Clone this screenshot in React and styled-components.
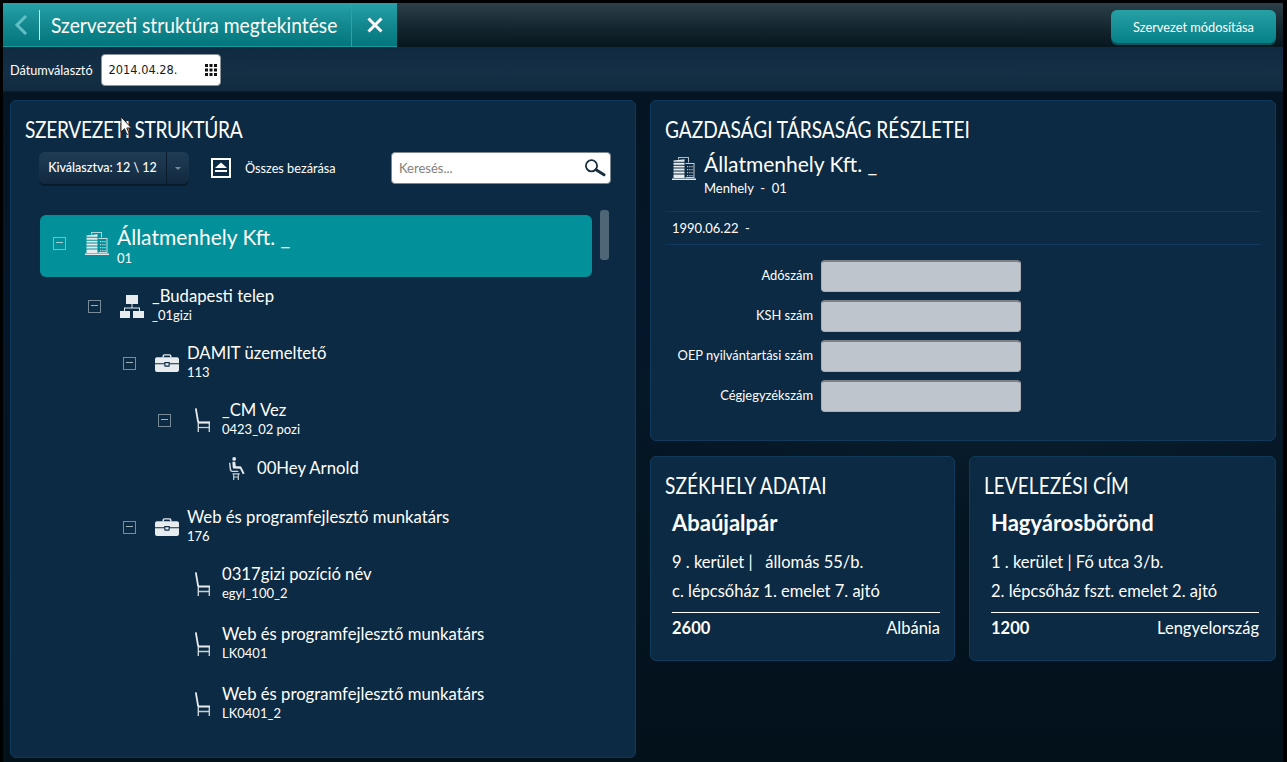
import React from 'react'
import styled, { createGlobalStyle } from 'styled-components'

const GlobalStyle = createGlobalStyle`
  html, body { margin: 0; padding: 0; height: 100%; background: #000; }
  body { font-family: Lato, "Liberation Sans", sans-serif; color: #fff; overflow: hidden; }
  * { box-sizing: border-box; }
`

const Frame = styled.div`
  position: relative;
  width: 1287px;
  height: 762px;
  padding: 3px 4px 0 3px;
  overflow: hidden;
  background: #000;
`

const Screen = styled.div`
  height: 100%;
  background:
    radial-gradient(420px 120px at 1010px 395px, rgba(40, 80, 90, 0.16), transparent),
    linear-gradient(180deg, #04131f 0%, #04172a 40%, #041522 70%, #03111b 100%);
`

const TopBar = styled.header`
  display: flex;
  justify-content: space-between;
  height: 44px;
  padding-right: 7px;
  background: linear-gradient(180deg, #2d3f48 0%, #14262f 55%, #07161f 100%);
`

const TitleTab = styled.div`
  display: flex;
  align-items: center;
  width: 394px;
  background: linear-gradient(180deg, #28a2aa 0%, #13888f 50%, #03767d 100%);
  border-bottom: 1px solid #16999f;
`

const BackButton = styled.div`
  display: flex;
  flex: none;
  align-items: center;
  justify-content: center;
  width: 36px;
  height: 100%;
  color: #62c0c4;
`

const TitleSlot = styled.div`
  flex: 1;
  min-width: 0;
  height: 30px;
  padding-left: 11px;
  border-left: 1px solid #d6eeee;
`

const TitleText = styled.h1`
  display: inline-block;
  margin: 0;
  font-size: 22px;
  font-weight: 400;
  line-height: 29px;
  white-space: nowrap;
  transform: scaleX(0.875);
  transform-origin: 0 50%;
`

const CloseButton = styled.div`
  display: flex;
  flex: none;
  align-items: center;
  justify-content: center;
  width: 46px;
  height: 100%;
  border-left: 1px solid #27a4a9;
`

const PrimaryButton = styled.button`
  width: 165px;
  height: 33px;
  margin-top: 7px;
  padding: 0;
  border: 0;
  border-radius: 6px;
  background: linear-gradient(180deg, #27a1a6 0%, #058086 100%);
  box-shadow: 0 2px 0 #07545c;
  color: #fff;
  font-family: inherit;
  font-size: 12.8px;
`

const FilterBar = styled.div`
  display: flex;
  align-items: center;
  gap: 8px;
  height: 45px;
  padding-left: 7px;
  border-top: 1px solid #0f2b45;
  border-bottom: 1px solid #0a1e2e;
  background: linear-gradient(180deg, #102a42 0%, #152f45 60%, #112a3e 100%);
`

const FilterLabel = styled.label`
  font-size: 12.7px;
`

const DateBox = styled.div`
  display: flex;
  align-items: center;
  justify-content: space-between;
  width: 120px;
  height: 32px;
  padding: 0 3px 0 7px;
  background: #fff;
  border: 1px solid #8b939a;
  border-radius: 4px;
  color: #1a1a1a;
  font-family: "DejaVu Sans", sans-serif;
  font-size: 11.4px;
`

const Content = styled.main`
  display: grid;
  grid-template-columns: 626px 626px;
  gap: 14px;
  padding: 8px 7px 0;
`

const Panel = styled.section`
  position: relative;
  height: ${(p) => p.$height}px;
  padding: 15px 14px 0;
  background: #0c2a43;
  border: 1px solid #103a5c;
  border-radius: 6px;
  overflow: hidden;
`

const PanelTitle = styled.h2`
  margin: 0;
  font-size: 22.5px;
  font-weight: 400;
  line-height: 28px;
  letter-spacing: ${(p) => (p.$tight ? '-0.35px' : '0')};
  text-transform: uppercase;
  white-space: nowrap;
  transform: scaleX(0.85);
  transform-origin: 0 50%;
`

const TreeTools = styled.div`
  display: flex;
  align-items: center;
  margin: 8px 0 0 14px;
  height: 32px;
`

const SplitButton = styled.div`
  display: flex;
  width: 150px;
  height: 32px;
  border-radius: 6px;
  background: linear-gradient(180deg, #1f3c55 0%, #11293f 100%);
  box-shadow: 0 2px 0 #081b2b;
  font-size: 12.5px;
  font-weight: 500;
  line-height: 32px;
`

const SplitLabel = styled.span`
  flex: 1;
  text-align: center;
  white-space: nowrap;
  border-right: 1px solid #0a1c2c;
`

const SplitCaret = styled.span`
  display: flex;
  align-items: center;
  justify-content: center;
  width: 22px;
  &::after {
    content: '';
    border: 3px solid transparent;
    border-top: 3px solid #7a8c9a;
    margin-top: 3px;
  }
`

const CollapseAll = styled.div`
  display: flex;
  align-items: center;
  gap: 14px;
  margin-left: 22px;
  font-size: 12.7px;
  white-space: nowrap;
`

const SearchBox = styled.div`
  display: flex;
  align-items: center;
  justify-content: space-between;
  width: 220px;
  height: 32px;
  margin-left: auto;
  margin-right: 10px;
  padding: 0 4px 0 7px;
  background: #fff;
  border: 1px solid #7d8790;
  border-radius: 4px;
  color: #85807c;
  font-size: 13px;
`

const Tree = styled.div`
  margin: 31px 0 0 15px;
  width: 552px;
`

const TreeRow = styled.div`
  display: flex;
  align-items: center;
  min-height: ${(p) => (p.$root ? '62px' : '0')};
  margin-top: ${(p) => p.$gap ?? 19}px;
  padding-left: ${(p) => 13 + 35 * p.$level}px;
  padding-bottom: ${(p) => (p.$root ? 6 : 0)}px;
  border-radius: 6px;
  background: ${(p) => (p.$root ? '#02919a' : 'transparent')};
`

const Toggle = styled.span`
  position: relative;
  flex: none;
  width: 13px;
  height: 13px;
  border: 1px solid ${(p) => (p.$hidden ? 'transparent' : 'rgba(225, 235, 240, 0.5)')};
  &::after {
    content: '';
    display: ${(p) => (p.$hidden ? 'none' : 'block')};
    margin: 4.5px 2px 0;
    height: 1px;
    background: rgba(225, 235, 240, 0.7);
  }
`

const NodeIcon = styled.span`
  display: flex;
  justify-content: center;
  flex: none;
  width: 24px;
  margin: 0 8px 0 19px;
  color: #e8ecef;
`

const NodeText = styled.div`
  min-width: 0;
`

const NodeTitle = styled.div`
  font-size: ${(p) => (p.$root ? 21 : 16.7)}px;
  line-height: ${(p) => (p.$root ? 36 : 19)}px;
  white-space: nowrap;
`

const NodeCode = styled.div`
  font-size: 13px;
  line-height: 19px;
  margin-top: ${(p) => (p.$root ? -6 : 0)}px;
`

const ScrollThumb = styled.div`
  position: absolute;
  left: 589px;
  top: 109px;
  width: 9px;
  height: 50px;
  border-radius: 3px;
  background: #4f6676;
`

const RightColumn = styled.div`
  display: flex;
  flex-direction: column;
  gap: 15px;
`

const CompanyHead = styled.div`
  display: flex;
  align-items: flex-start;
  gap: 8px;
  height: 65px;
  padding: 0 0 0 7px;
  margin-top: 3px;
  border-bottom: 1px solid #123a5c;
`

const CompanyIcon = styled.span`
  margin-top: 9px;
  color: #e8ecef;
`

const CompanyName = styled.div`
  padding-top: 2px;
  font-size: 21px;
  line-height: 30px;
  white-space: nowrap;
`

const CompanySub = styled.div`
  font-size: 13px;
  line-height: 18px;
  white-space: pre;
`

const DateLine = styled.div`
  height: 33px;
  padding-left: 7px;
  border-bottom: 1px solid #123a5c;
  font-size: 13px;
  line-height: 33px;
  white-space: pre;
`

const FormGrid = styled.div`
  display: grid;
  grid-template-columns: 148px 200px;
  column-gap: 8px;
  row-gap: 8px;
  align-items: center;
  margin-top: 15px;
`

const FieldLabel = styled.label`
  padding-bottom: 2px;
  text-align: right;
  font-size: 12.9px;
  white-space: nowrap;
`

const FieldInput = styled.div`
  height: 32px;
  background: #bfc5cc;
  border: 1px solid #a9afb5;
  border-top: 2px solid #7d8084;
  border-radius: 4px;
`

const AddressRow = styled.div`
  display: grid;
  grid-template-columns: 305px 307px;
  gap: 14px;
`

const AddressBody = styled.div`
  padding: 0 ${(p) => p.$trim}px 0 7px;
`

const City = styled.div`
  margin-top: 9px;
  font-size: 22px;
  font-weight: 700;
  line-height: 28px;
`

const AddressLine = styled.div`
  margin-top: ${(p) => p.$top}px;
  font-size: 16.5px;
  line-height: 20px;
  white-space: pre;
`

const AddressFoot = styled.div`
  display: flex;
  justify-content: space-between;
  margin-top: 11px;
  padding-top: 5px;
  border-top: 1px solid #fff;
  font-size: 16.5px;
  line-height: 20px;
  strong { font-weight: 700; }
`

const Cursor = styled.svg`
  position: absolute;
  left: 120px;
  top: 116px;
`

const BuildingIcon = ({ size = 24 }) => (
  <svg width={size} height={size} viewBox="0 0 24 24" fill="currentColor">
    <path d="M0 22.6h24V24H0z" />
    <path d="M6 3.500V1h11v5.500h-1V2H7v1.500z" opacity=".75" />
    <path d="M1.500 4.500l11-1.200v2.500h-11zM1.500 6.800h11v1.900h-11zM1.500 9.700h11v1.900h-11zM1.500 12.600h11v1.900h-11zM1.500 15.500h11v1.900h-11zM1.500 18.400h11v3.600h-11z" />
    <path d="M13.500 7h9v15h-9v-1h8V8h-8z" opacity=".85" />
    <path
      d="M15 10h1.200v1.200H15zM17.300 10h1.200v1.200h-1.200zM19.400 10h1.200v1.200h-1.200zM15 13h1.200v1.200H15zM17.300 13h1.200v1.200h-1.200zM19.400 13h1.200v1.200h-1.200zM15 16h1.200v1.200H15zM17.300 16h1.200v1.200h-1.200zM19.400 16h1.200v1.200h-1.200zM15 19h1.200v1.200H15zM17.300 19h1.200v1.200h-1.200zM19.400 19h1.200v1.200h-1.200z"
      opacity=".8"
    />
  </svg>
)

const SitemapIcon = () => (
  <svg width="24" height="23" viewBox="0 0 24 23" fill="currentColor">
    <path d="M6 0h12v9H6zM0 16h10v7H0zM13 16h11v7H13z" />
    <path d="M11.500 9h1v3.500H20V16h-1v-2.500H5V16H4v-3.500h7.500z" />
  </svg>
)

const BriefcaseIcon = () => (
  <svg width="24" height="18" viewBox="0 0 24 18" fill="currentColor">
    <path d="M7.500 3.500V2.200C7.500 1 8.400.2 9.500.2h5c1.100 0 2 .8 2 2v1.300h-1.400V2.400c0-.5-.3-.8-.8-.8H9.700c-.5 0-.8.3-.8.800v1.100z" />
    <path d="M2 3.300h20c1.100 0 2 .9 2 2v3.900h-9.300V8H9.300v1.200H0V5.300c0-1.100.9-2 2-2z" />
    <path d="M0 10.300h9.300v1.400c0 .6.400 1 1 1h3.400c.6 0 1-.4 1-1v-1.400H24V16c0 1.100-.9 2-2 2H2c-1.100 0-2-.9-2-2z" />
    <path d="M10.400 9.200h3.200v2.300h-3.200z" />
  </svg>
)

const ChairIcon = () => (
  <svg width="15" height="24" viewBox="0 0 15 24" fill="none" stroke="currentColor">
    <path d="M0.800 0.300L3.200 14.500" strokeWidth="1.800" />
    <path d="M3 14.500H15" strokeWidth="2.200" />
    <path d="M3.300 15v9M14.300 14v10" strokeWidth="1.400" opacity=".85" />
    <path d="M3.500 19.500H14" strokeWidth="1.300" opacity=".85" />
  </svg>
)

const SeatedIcon = () => (
  <svg width="17" height="23" viewBox="0 0 17 23" fill="currentColor">
    <circle cx="5.200" cy="1.900" r="1.900" />
    <path d="M3.400 4.800h2.800l.6 4.400 4.300.1c.7 0 1.100.3 1.400.9l3.100 6.200-1.800.8-2.700-5.500-6.300-.1c-.6 0-1-.4-1.100-1z" />
    <path d="M1.300 5.500l.9 6.800c.1 1 .7 1.500 1.600 1.500h5.500v1.200H3.200C1.700 15 .9 14 .7 12.600L0 6z" opacity=".9" />
    <path d="M3.500 16.300h7.300v1.200H9.900V23H8.700v-2.400H5.300V23H4.100v-5.500h-.6zM5.300 17.500v2h3.400v-2z" opacity=".85" />
  </svg>
)

const EjectIcon = () => (
  <svg width="20" height="20" viewBox="0 0 20 20" fill="#fff">
    <path fillRule="evenodd" d="M0 0h20v20H0zM2 2v16h16V2z" />
    <path d="M10 4.500l6 5.500H4zM4 12h12v2H4z" />
  </svg>
)

const CalendarIcon = () => (
  <svg width="12" height="12" viewBox="0 0 12 12" fill="#111">
    <path d="M0 0h3v3H0zM4.500 0h3v3h-3zM9 0h3v3H9zM0 4.500h3v3H0zM4.500 4.500h3v3h-3zM9 4.500h3v3H9zM0 9h3v3H0zM4.500 9h3v3h-3zM9 9h3v3H9z" />
  </svg>
)

const SearchIcon = () => (
  <svg width="22" height="18" viewBox="0 0 22 18" fill="none" stroke="#17303f">
    <circle cx="7.500" cy="6.800" r="5.600" strokeWidth="1.800" />
    <path d="M12 10.800l8 5" strokeWidth="3" strokeLinecap="round" />
  </svg>
)

const chair = <ChairIcon />

const nodes = [
  { level: 1, gap: 10, icon: <SitemapIcon />, title: '_Budapesti telep', code: '_01gizi', toggle: true },
  { level: 2, icon: <BriefcaseIcon />, title: 'DAMIT üzemeltető', code: '113', toggle: true },
  { level: 3, icon: chair, title: '_CM Vez', code: '0423_02 pozi', toggle: true },
  { level: 4, gap: 18, icon: <SeatedIcon />, title: '00Hey Arnold' },
  { level: 2, gap: 28, icon: <BriefcaseIcon />, title: 'Web és programfejlesztő munkatárs', code: '176', toggle: true },
  { level: 3, icon: chair, title: '0317gizi pozíció név', code: 'egyl_100_2' },
  { level: 3, gap: 22, icon: chair, title: 'Web és programfejlesztő munkatárs', code: 'LK0401' },
  { level: 3, gap: 22, icon: chair, title: 'Web és programfejlesztő munkatárs', code: 'LK0401_2' },
]

const fields = ['Adószám', 'KSH szám', 'OEP nyilvántartási szám', 'Cégjegyzékszám']

const addresses = [
  {
    title: 'Székhely adatai',
    city: 'Abaújalpár',
    line1: '9 . kerület |   állomás 55/b.',
    line2: 'c. lépcsőház 1. emelet 7. ajtó',
    zip: '2600',
    country: 'Albánia',
    trim: 0,
  },
  {
    title: 'Levelezési cím',
    city: 'Hagyárosbörönd',
    line1: '1 . kerület | Fő utca 3/b.',
    line2: '2. lépcsőház fszt. emelet 2. ajtó',
    zip: '1200',
    country: 'Lengyelország',
    trim: 2,
  },
]

const App = () => {
  return (
    <Frame>
      <GlobalStyle />
      <Screen>
        <TopBar>
          <TitleTab>
            <BackButton>
              <svg width="14" height="22" viewBox="0 0 14 22" fill="none" stroke="currentColor" strokeWidth="3">
                <path d="M12 2L3 11l9 9" />
              </svg>
            </BackButton>
            <TitleSlot>
              <TitleText>Szervezeti struktúra megtekintése</TitleText>
            </TitleSlot>
            <CloseButton>
              <svg width="16" height="16" viewBox="0 0 16 16" stroke="#fff" strokeWidth="3">
                <path d="M1.500 1.500l13 13M14.500 1.500l-13 13" />
              </svg>
            </CloseButton>
          </TitleTab>
          <PrimaryButton>Szervezet módosítása</PrimaryButton>
        </TopBar>

        <FilterBar>
          <FilterLabel>Dátumválasztó</FilterLabel>
          <DateBox>
            2014.04.28.
            <CalendarIcon />
          </DateBox>
        </FilterBar>

        <Content>
          <Panel $height={658}>
            <PanelTitle $tight>Szervezeti struktúra</PanelTitle>
            <TreeTools>
              <SplitButton>
                <SplitLabel>Kiválasztva: 12 \ 12</SplitLabel>
                <SplitCaret />
              </SplitButton>
              <CollapseAll>
                <EjectIcon />
                Összes bezárása
              </CollapseAll>
              <SearchBox>
                Keresés...
                <SearchIcon />
              </SearchBox>
            </TreeTools>
            <ScrollThumb />
            <Tree>
              <TreeRow $root $level={0} $gap={0}>
                <Toggle />
                <NodeIcon>
                  <BuildingIcon />
                </NodeIcon>
                <NodeText>
                  <NodeTitle $root>Állatmenhely Kft. _</NodeTitle>
                  <NodeCode $root>01</NodeCode>
                </NodeText>
              </TreeRow>
              {nodes.map((node, i) => (
                <TreeRow key={i} $level={node.level} $gap={node.gap}>
                  <Toggle $hidden={!node.toggle} />
                  <NodeIcon>{node.icon}</NodeIcon>
                  <NodeText>
                    <NodeTitle>{node.title}</NodeTitle>
                    {node.code && <NodeCode>{node.code}</NodeCode>}
                  </NodeText>
                </TreeRow>
              ))}
            </Tree>
          </Panel>

          <RightColumn>
            <Panel $height={341}>
              <PanelTitle>Gazdasági társaság részletei</PanelTitle>
              <CompanyHead>
                <CompanyIcon>
                  <BuildingIcon />
                </CompanyIcon>
                <div>
                  <CompanyName>Állatmenhely Kft. _</CompanyName>
                  <CompanySub>Menhely  -  01</CompanySub>
                </div>
              </CompanyHead>
              <DateLine>1990.06.22  -</DateLine>
              <FormGrid>
                {fields.map((label) => (
                  <React.Fragment key={label}>
                    <FieldLabel>{label}</FieldLabel>
                    <FieldInput />
                  </React.Fragment>
                ))}
              </FormGrid>
            </Panel>

            <AddressRow>
              {addresses.map((a) => (
                <Panel key={a.title} $height={205}>
                  <PanelTitle>{a.title}</PanelTitle>
                  <AddressBody $trim={a.trim}>
                    <City>{a.city}</City>
                    <AddressLine $top={15}>{a.line1}</AddressLine>
                    <AddressLine $top={9}>{a.line2}</AddressLine>
                    <AddressFoot>
                      <strong>{a.zip}</strong>
                      <span>{a.country}</span>
                    </AddressFoot>
                  </AddressBody>
                </Panel>
              ))}
            </AddressRow>
          </RightColumn>
        </Content>
      </Screen>
      <Cursor width="12" height="20" viewBox="0 0 12 20">
        <path d="M1 1v15l3.500-3.300 2.500 5.800 2.300-1-2.500-5.500h4.700z" fill="#fff" stroke="#222" strokeWidth="1" />
      </Cursor>
    </Frame>
  )
}

export default App
